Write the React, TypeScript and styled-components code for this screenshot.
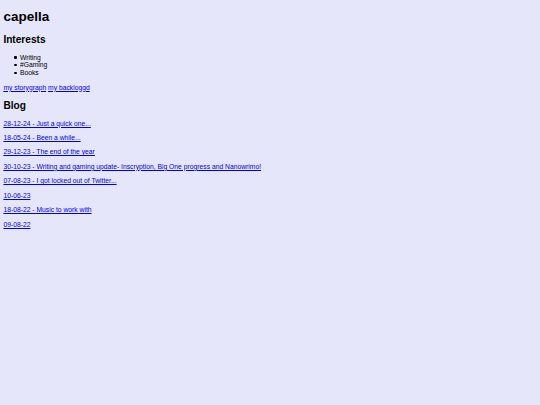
import React from 'react'
import styled, { createGlobalStyle } from 'styled-components'

const GlobalStyle = createGlobalStyle`
    html, body {
        background: #e6e6fa;
    }
    body {
        margin: 3.4px;
        font-family: 'Liberation Sans', Arial, sans-serif;
        font-size: 6.75px;
        line-height: 1.14;
        color: #000;
    }
`

const Title = styled.h1`
    font-size: 2em;
    margin: 6px 0 0.67em;
    font-weight: bold;
`

const SectionHeading = styled.h2`
    font-size: 1.5em;
    margin: 0.83em 0;
    font-weight: bold;
`

const InterestList = styled.ul`
    margin: 1em 0;
    padding-left: 16.6px;
    list-style: none;
`

const InterestItem = styled.li`
    &::before {
        content: '';
        display: inline-block;
        width: 2.2px;
        height: 2.2px;
        border-radius: 50%;
        background: #000;
        margin-left: -5.6px;
        margin-right: 3.4px;
        vertical-align: 1.2px;
    }
`

const Paragraph = styled.p`
    margin: 1em 0;
`

const Link = styled.a`
    color: #0000ee;
    text-decoration: underline;
`

const interests = ['Writing', '#Gaming', 'Books']

const posts = [
    '28-12-24 - Just a quick one...',
    '18-05-24 - Been a while...',
    '29-12-23 - The end of the year',
    '30-10-23 - Writing and gaming update- Inscryption, Big One progress and Nanowrimo!',
    '07-08-23 - I got locked out of Twitter...',
    '10-06-23',
    '18-08-22 - Music to work with',
    '09-08-22',
]

const App = () => {
    return (
        <>
            <GlobalStyle />
            <Title>capella</Title>
            <SectionHeading>Interests</SectionHeading>
            <InterestList>
                {interests.map((item) => (
                    <InterestItem key={item}>{item}</InterestItem>
                ))}
            </InterestList>
            <Paragraph>
                <Link href="#">my storygraph</Link> <Link href="#">my backloggd</Link>
            </Paragraph>
            <SectionHeading>Blog</SectionHeading>
            {posts.map((post) => (
                <Paragraph key={post}>
                    <Link href="#">{post}</Link>
                </Paragraph>
            ))}
        </>
    )
}

export default App
